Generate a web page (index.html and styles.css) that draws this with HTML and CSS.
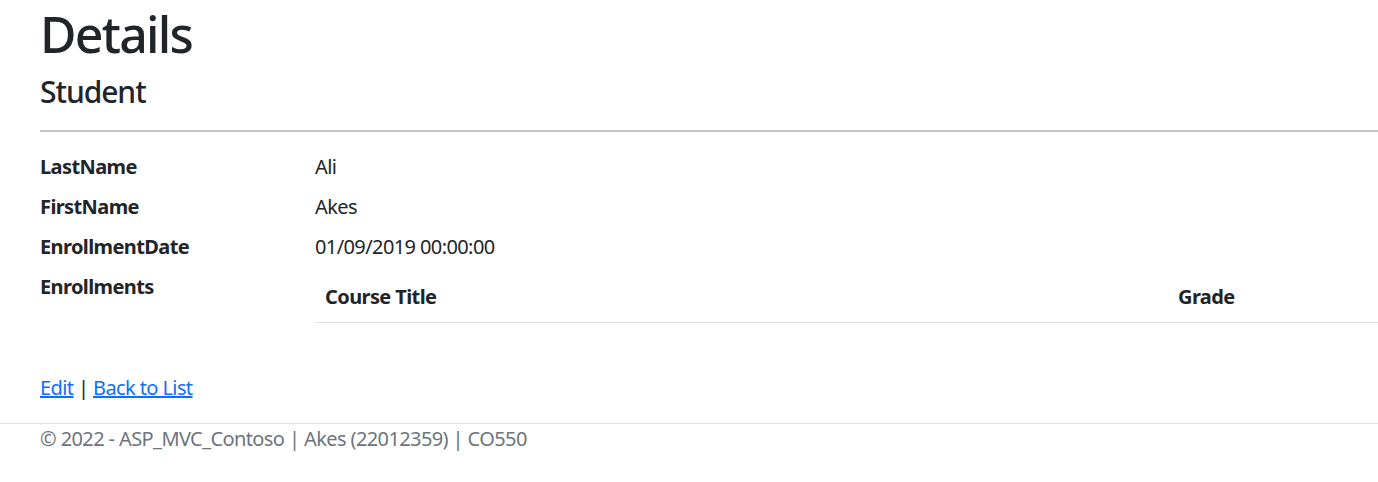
FILE: index.html
```html
<!DOCTYPE html>
<html lang="en">
<head>
<meta charset="utf-8">
<title>Details - ASP_MVC_Contoso</title>
<link rel="stylesheet" href="styles.css">
</head>
<body>
<div class="container">
  <main class="main">
    <h1 class="title">Details</h1>
    <div>
      <h4 class="subtitle">Student</h4>
      <hr class="rule">
      <dl class="details">
        <dt>LastName</dt>
        <dd>Ali</dd>
        <dt>FirstName</dt>
        <dd>Akes</dd>
        <dt>EnrollmentDate</dt>
        <dd>01/09/2019 00:00:00</dd>
        <dt>Enrollments</dt>
        <dd>
          <table class="table">
            <thead>
              <tr>
                <th class="col-title">Course Title</th>
                <th>Grade</th>
              </tr>
            </thead>
            <tbody></tbody>
          </table>
        </dd>
      </dl>
    </div>
    <div class="actions">
      <a href="#">Edit</a> |
      <a href="#">Back to List</a>
    </div>
  </main>
</div>
<footer class="footer">
  <div class="container">&copy; 2022 - ASP_MVC_Contoso | Akes (22012359) | CO550</div>
</footer>
</body>
</html>
```
FILE: styles.css
```css
* { box-sizing: border-box; }
html, body { margin: 0; padding: 0; }
body {
  font-family: "Noto Sans", "Open Sans", sans-serif;
  font-size: 20px;
  line-height: 1.5;
  letter-spacing: -0.03em;
  color: #212529;
  background: #fff;
}
.container { padding-left: 40px; }
.main { padding-top: 4px; padding-bottom: 20px; }
.title {
  margin: 0 0 10px;
  font-size: 50px;
  font-weight: 500;
  line-height: 1.2;
  letter-spacing: -0.035em;
}
.subtitle {
  margin: 0 0 10px;
  font-size: 30px;
  font-weight: 500;
  line-height: 1.2;
  letter-spacing: -0.035em;
}
.rule {
  margin: 20px 0;
  border: 0;
  border-top: 2px solid #212529;
  opacity: 0.25;
}
.details {
  display: grid;
  grid-template-columns: 275px 1fr;
  margin: 0 0 20px;
}
.details dt { font-weight: 700; margin-bottom: 10px; }
.details dd { margin: 0 0 10px; }
.table {
  width: 100%;
  border-collapse: collapse;
  margin-bottom: 20px;
}
.table th {
  text-align: left;
  padding: 10px;
  font-weight: 700;
  border-bottom: 1px solid #dee2e6;
}
.table .col-title { width: 853px; }
.actions a { color: #0d6efd; text-decoration: underline; }
.footer {
  border-top: 1px solid #dee2e6;
  color: #6c757d;
  line-height: 30px;
}
```
